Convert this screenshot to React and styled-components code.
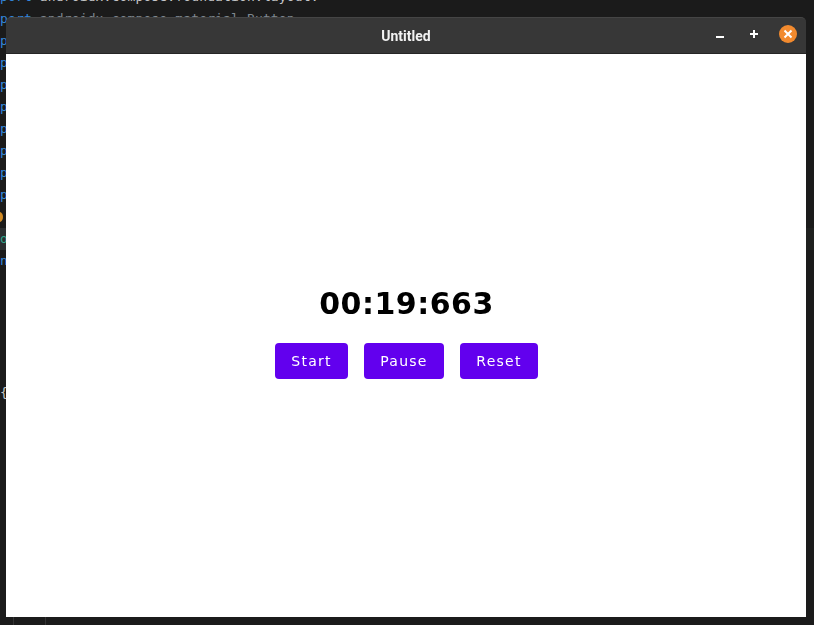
import React from "react";
import styled, { createGlobalStyle } from "styled-components";

const codeLines = [
  { key: "port", rest: " androidx.compose.foundation.layout.*" },
  { key: "port", rest: " androidx.compose.material.Button", dim: true },
  ...Array(8).fill({ key: "p" }),
  { bulb: true },
  { key: "o", teal: true, active: true },
  { key: "n" },
  ...Array(5).fill({}),
  { rest: "{" },
];

export default function App() {
  return (
    <Desktop>
      <GlobalStyle />
      <Editor>
        {codeLines.map((line, i) => (
          <CodeLine key={i} $dim={line.dim} $active={line.active}>
            {line.bulb && <Bulb />}
            {line.key && <Keyword $teal={line.teal}>{line.key}</Keyword>}
            {line.rest}
          </CodeLine>
        ))}
      </Editor>
      <StatusStrip>
        <GutterCell $width={13} />
        <GutterCell $width={31} />
      </StatusStrip>
      <Window>
        <TitleBar>
          <Title>Untitled</Title>
          <WindowControls>
            <PlainControl aria-label="minimize">
              <svg width="10" height="10" viewBox="0 0 10 10">
                <rect x="1" y="7" width="8" height="2" fill="#fff" />
              </svg>
            </PlainControl>
            <PlainControl aria-label="maximize">
              <svg width="10" height="10" viewBox="0 0 10 10">
                <path d="M1 5h8M5 1v8" stroke="#fff" strokeWidth="2" />
              </svg>
            </PlainControl>
            <CloseControl aria-label="close">
              <svg width="10" height="10" viewBox="0 0 10 10">
                <path d="M1.5 1.5l7 7M8.5 1.5l-7 7" stroke="#fff" strokeWidth="2" />
              </svg>
            </CloseControl>
          </WindowControls>
        </TitleBar>
        <Content>
          <Time>00:19:663</Time>
          <ButtonRow>
            <ActionButton $width={73}>Start</ActionButton>
            <ActionButton $width={80}>Pause</ActionButton>
            <ActionButton $width={78}>Reset</ActionButton>
          </ButtonRow>
        </Content>
      </Window>
    </Desktop>
  );
}

const GlobalStyle = createGlobalStyle`
  html, body {
    margin: 0;
    padding: 0;
    background: #1b1b1b;
  }
`;

const Desktop = styled.div`
  position: relative;
  width: 814px;
  height: 625px;
  overflow: hidden;
  display: flex;
  flex-direction: column;
  background: #1b1b1b;
`;

const Editor = styled.div`
  flex: 1;
  margin-top: -14px;
`;

const CodeLine = styled.div`
  position: relative;
  height: 22px;
  font-family: "DejaVu Sans Mono", monospace;
  font-size: 13px;
  letter-spacing: 0.14px;
  line-height: 22px;
  white-space: pre;
  color: ${(p) => (p.$dim ? "#7f8890" : "#c6c8ca")};
  background: ${(p) =>
    p.$active ? "linear-gradient(to right, #2c2f30 6px, #202120 6px)" : "transparent"};
`;

const Keyword = styled.span`
  color: ${(p) => (p.$teal ? "#2fa58c" : "#3386dc")};
`;

const Bulb = styled.div`
  position: absolute;
  left: -4px;
  top: 6px;
  width: 7px;
  height: 10px;
  border-radius: 50%;
  background: #d18a24;
`;

const StatusStrip = styled.div`
  flex: none;
  display: flex;
  height: 8px;
`;

const GutterCell = styled.div`
  width: ${(p) => p.$width}px;
  border-right: 1px solid #333;
`;

const Window = styled.div`
  position: absolute;
  left: 6px;
  top: 17px;
  width: 800px;
  height: 600px;
  display: flex;
  flex-direction: column;
  will-change: transform;
`;

const TitleBar = styled.div`
  position: relative;
  flex: none;
  box-sizing: border-box;
  height: 37px;
  display: flex;
  align-items: center;
  justify-content: center;
  background: #373737;
  border-top: 1px solid #454545;
  border-bottom: 1px solid #252525;
  border-radius: 5px 5px 0 0;
`;

const Title = styled.div`
  font-family: "Roboto", sans-serif;
  font-weight: 700;
  font-size: 14px;
  color: #f2f2f2;
`;

const WindowControls = styled.div`
  position: absolute;
  right: 9px;
  top: 7px;
  display: flex;
  align-items: center;
  gap: 16px;
`;

const PlainControl = styled.div`
  width: 18px;
  height: 18px;
  display: flex;
  align-items: center;
  justify-content: center;
`;

const CloseControl = styled(PlainControl)`
  border-radius: 50%;
  background: #f28a2e;
`;

const Content = styled.div`
  flex: 1;
  box-sizing: border-box;
  padding-bottom: 6px;
  display: flex;
  flex-direction: column;
  align-items: center;
  justify-content: center;
  background: #fff;
`;

const Time = styled.div`
  padding-left: 1px;
  font-family: "DejaVu Sans", sans-serif;
  font-weight: 700;
  font-size: 30px;
  line-height: 36px;
  letter-spacing: 0.5px;
  color: #000;
`;

const ButtonRow = styled.div`
  display: flex;
  gap: 16px;
  margin-top: 21px;
`;

const ActionButton = styled.button`
  box-sizing: border-box;
  width: ${(p) => p.$width}px;
  height: 36px;
  padding: 0 0 0 1px;
  border: none;
  border-radius: 4px;
  background: #6200ee;
  color: #fff;
  font-family: "DejaVu Sans", sans-serif;
  font-size: 14px;
  letter-spacing: 1.25px;
`;
